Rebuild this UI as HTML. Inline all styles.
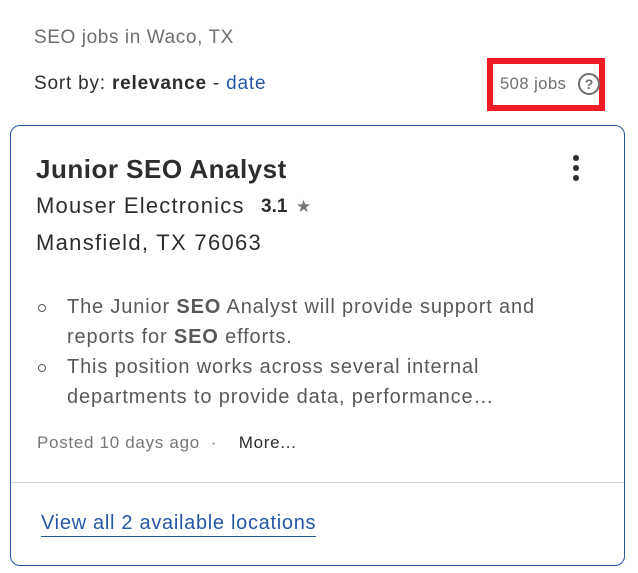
<!DOCTYPE html>
<html><head><meta charset="utf-8"><style>
body{margin:0;width:638px;height:573px;background:#fff;font-family:"Liberation Sans",sans-serif;position:relative;overflow:hidden}
.a{position:absolute;white-space:nowrap}
</style></head><body>
<div class="a" style="left:34px;top:27px;font-size:19px;letter-spacing:0.6px;color:#6f6f6f">SEO jobs in Waco, TX</div>
<div class="a" style="left:34px;top:73px;font-size:19px;letter-spacing:0.8px;color:#2d2d2d">Sort by: <b>relevance</b> - <span style="color:#2557a7">date</span></div>
<div class="a" style="left:487px;top:58px;width:106px;height:41px;border:6px solid #ed1c24"></div>
<div class="a" style="left:500px;top:75px;font-size:16.5px;letter-spacing:0.5px;color:#6f6f6f">508 jobs</div>
<div class="a" style="left:578px;top:73px;width:22px;height:22px;border:2px solid #6f6f6f;border-radius:50%;box-sizing:border-box;font-size:14px;font-weight:bold;color:#6f6f6f;text-align:center;line-height:18px">?</div>
<div class="a" style="left:10px;top:125px;width:615px;height:441px;border:1px solid #2557a7;border-radius:10px;box-sizing:border-box"></div>
<div class="a" style="left:11px;top:482px;width:613px;height:1px;background:#d4d2d0"></div>
<div class="a" style="left:36px;top:154px;font-size:26px;letter-spacing:0.5px;font-weight:bold;color:#2d2d2d">Junior SEO Analyst</div>
<div class="a" style="left:573px;top:155px;width:6px">
<div style="width:6px;height:6px;border-radius:50%;background:#2d2d2d;margin-bottom:4px"></div>
<div style="width:6px;height:6px;border-radius:50%;background:#2d2d2d;margin-bottom:4px"></div>
<div style="width:6px;height:6px;border-radius:50%;background:#2d2d2d"></div></div>
<div class="a" style="left:36px;top:193px;font-size:22px;letter-spacing:1.2px;color:#2d2d2d">Mouser Electronics</div>
<div class="a" style="left:261px;top:196px;font-size:19px;font-weight:bold;color:#2d2d2d">3.1</div>
<div class="a" style="left:296px;top:197px;font-size:17px;color:#767676">★</div>
<div class="a" style="left:36px;top:230px;font-size:22px;letter-spacing:1.3px;color:#2d2d2d">Mansfield, TX 76063</div>
<div class="a" style="left:67px;top:292px;font-size:20px;letter-spacing:0.85px;line-height:30px;color:#595959">The Junior <b>SEO</b> Analyst will provide support and<br>reports for <b>SEO</b> efforts.<br>This position works across several internal<br>departments to provide data, performance…</div>
<div class="a" style="left:38px;top:304px;width:6px;height:6px;border:1.3px solid #595959;border-radius:50%"></div>
<div class="a" style="left:38px;top:364px;width:6px;height:6px;border:1.3px solid #595959;border-radius:50%"></div>
<div class="a" style="left:37px;top:433px;font-size:17px;letter-spacing:0.7px;color:#767676">Posted 10 days ago &nbsp;·&nbsp;&nbsp;&nbsp; <span style="color:#2d2d2d">More...</span></div>
<div class="a" style="left:41px;top:511px;font-size:20px;letter-spacing:0.7px;color:#2557a7;border-bottom:1px solid #2557a7;line-height:25px">View all 2 available locations</div>
</body></html>
